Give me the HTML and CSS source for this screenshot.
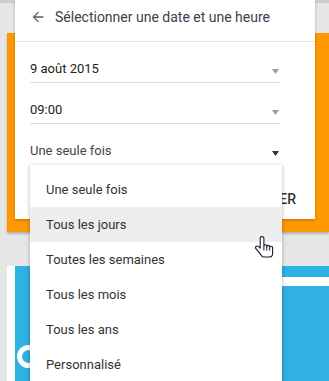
FILE: index.html
```html
<!DOCTYPE html>
<html lang="fr">
<head>
<meta charset="utf-8">
<link rel="stylesheet" href="styles.css">
</head>
<body>
<div class="page">
  <div class="topbar"></div>
  <div class="cards">
    <div class="orange-card"></div>
    <div class="blue-card">
      <div class="blue-image">
        <div class="stripe"></div>
        <div class="ring"></div>
      </div>
    </div>
  </div>

  <div class="dialog">
    <div class="dialog-header">
      <svg class="back" width="16" height="16" viewBox="0 0 24 24"><path d="M20 11H7.83l5.59-5.59L12 4l-8 8 8 8 1.41-1.41L7.83 13H20v-2z" fill="#5a5a66"/></svg>
      <span class="title">Sélectionner une date et une heure</span>
    </div>
    <div class="fields">
      <div class="field"><span class="value">9 août 2015</span><svg class="caret" width="7" height="5" viewBox="0 0 7 5"><polygon points="0,0 7,0 3.5,5" fill="#9e9e9e"/></svg></div>
      <div class="field"><span class="value">09:00</span><svg class="caret" width="7" height="5" viewBox="0 0 7 5"><polygon points="0,0 7,0 3.5,5" fill="#9e9e9e"/></svg></div>
      <div class="field active"><span class="value">Une seule fois</span><svg class="caret" width="7" height="5" viewBox="0 0 7 5"><polygon points="0,0 7,0 3.5,5" fill="#333333"/></svg></div>
    </div>
    <div class="actions"><span class="btn">ENREGISTRER</span></div>
  </div>

  <ul class="menu">
    <li class="item">Une seule fois</li>
    <li class="item hover">Tous les jours</li>
    <li class="item">Toutes les semaines</li>
    <li class="item">Tous les mois</li>
    <li class="item">Tous les ans</li>
    <li class="item">Personnalisé</li>
  </ul>

  <svg class="cursor" width="19" height="22" viewBox="0 0 19 22">
    <path d="M6.8 0.6C5.9 0.6 5.2 1.3 5.2 2.2L5.2 12.2L3.6 10.6C2.9 9.9 1.8 9.9 1.1 10.5C0.4 11.2 0.5 12.2 1.1 12.9L5.2 17.9C6.2 19.4 7.2 21 8.4 21L14.2 21C16 21 17.6 19.5 17.6 17.4L17.6 11.8C17.6 10.9 17 10.3 16.2 10.3C15.4 10.3 14.7 10.9 14.7 11.8L14.7 10.9C14.7 10 14.1 9.4 13.3 9.4C12.5 9.4 11.8 10 11.8 10.9L11.8 10.2C11.8 9.3 11.2 8.7 10.4 8.7C9.6 8.7 8.9 9.3 8.9 10.2L8.9 2.2C8.9 1.3 7.8 0.6 6.8 0.6Z" fill="#ffffff" stroke="#1a1a2a" stroke-width="1.1" stroke-linejoin="round"/>
    <path d="M8.9 10.2V14.6M11.8 10.9V14.6M14.7 11.8V14.6" stroke="#1a1a2a" stroke-width="1" fill="none"/>
  </svg>
</div>
</body>
</html>
```

FILE: styles.css
```css
* { box-sizing: border-box; }

html, body {
  margin: 0;
  padding: 0;
}

body {
  background: #e6e6e6;
  font-family: Roboto, "Liberation Sans", Arial, sans-serif;
  overflow: hidden;
}

.page {
  position: relative;
  width: 329px;
  height: 381px;
  overflow: hidden;
}

.topbar {
  height: 3px;
  background: #cdcdcd;
}

.cards {
  display: flex;
  flex-direction: column;
  padding-left: 7px;
  padding-top: 30px;
}

.orange-card {
  height: 199px;
  background: #ff9800;
  box-shadow: 0 2px 2px rgba(0, 0, 0, 0.22);
}

.blue-card {
  margin-top: 34px;
  height: 120px;
  background: #ffffff;
  padding-left: 8px;
  display: flex;
}

.blue-image {
  position: relative;
  flex: 1;
  background: #2fb1e1;
  padding-top: 11px;
  display: flex;
  flex-direction: column;
}

.stripe {
  height: 9px;
  margin-left: 160px;
  background: #ffffff;
}

.ring {
  position: absolute;
  left: 2px;
  top: 79px;
  width: 23px;
  height: 23px;
  border-radius: 50%;
  border: 5px solid #ffffff;
}

.dialog {
  position: absolute;
  left: 15px;
  top: 0;
  width: 300px;
  height: 219px;
  background: #ffffff;
  box-shadow: 0 1px 3px rgba(0, 0, 0, 0.25);
  display: flex;
  flex-direction: column;
}

.dialog-header {
  height: 42px;
  border-bottom: 1px solid #e3e3e3;
  display: flex;
  align-items: flex-start;
  padding: 9px 0 0 15px;
  gap: 9px;
}

.back {
  flex: none;
  margin-top: 0;
}

.title {
  font-size: 14px;
  line-height: 16px;
  color: #3e3e4c;
}

.fields {
  padding: 0 35px 0 15px;
  display: flex;
  flex-direction: column;
}

.field {
  height: 41px;
  border-bottom: 1px solid #dcdcdc;
  display: flex;
  align-items: flex-end;
  justify-content: space-between;
  padding-bottom: 5px;
  padding-right: 1px;
}

.field.active {
  border-bottom-color: transparent;
}

.value {
  font-size: 13px;
  line-height: 16px;
  color: #222222;
}

.field.active .value {
  color: #444444;
}

.caret {
  flex: none;
  margin-bottom: 3px;
}

.actions {
  display: flex;
  justify-content: flex-end;
  padding: 26px 19px 0 0;
}

.btn {
  font-size: 14px;
  line-height: 16px;
  font-weight: 500;
  color: #333333;
}

.menu {
  position: absolute;
  left: 30px;
  top: 165px;
  width: 252px;
  margin: 0;
  padding: 7px 0 0 0;
  list-style: none;
  background: #ffffff;
  box-shadow: 0 1px 4px rgba(0, 0, 0, 0.3);
}

.item {
  height: 35px;
  display: flex;
  align-items: center;
  padding-left: 16px;
  font-size: 13px;
  color: #333333;
}

.item.hover {
  background: #eeeeee;
}

.cursor {
  position: absolute;
  left: 255px;
  top: 236px;
}
```
